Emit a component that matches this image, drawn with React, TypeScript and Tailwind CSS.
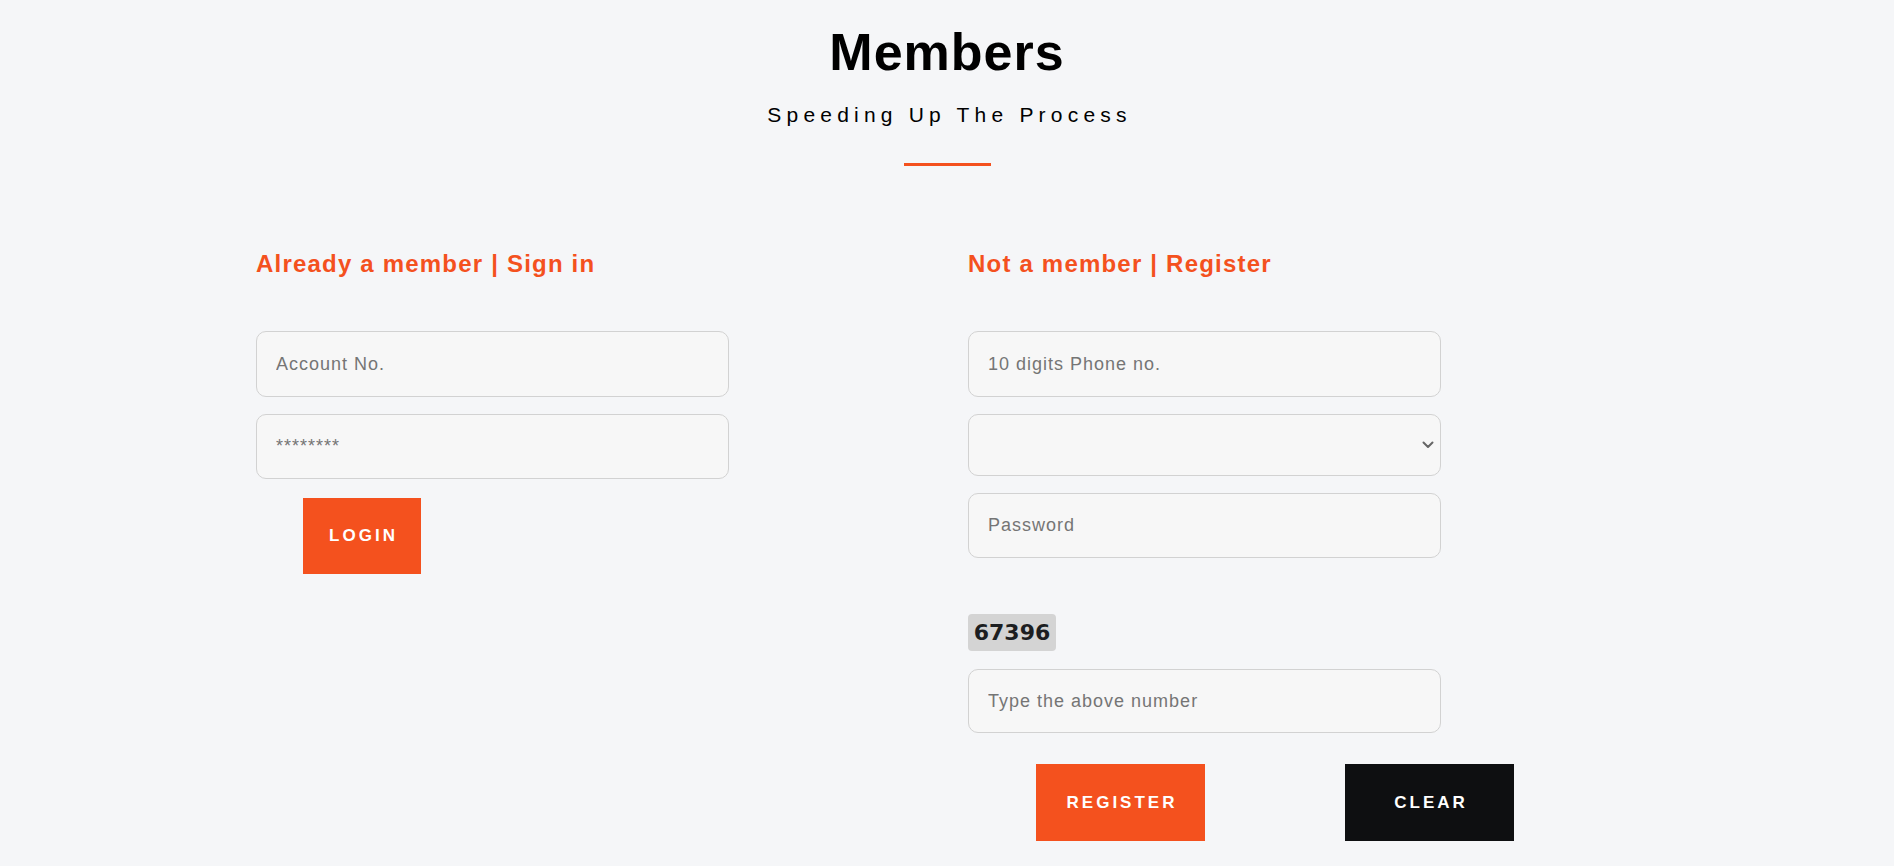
import { FunctionComponent, useState } from "react";

const inputClass =
  "block w-[473px] rounded-[10px] border border-[#d2d2d2] bg-[#f7f7f7] pl-[19px] pr-4 text-[18px] tracking-[1px] text-[#333] outline-none placeholder:text-[#757575]";

const ChevronDown = () => (
  <svg
    width="12"
    height="8"
    viewBox="0 0 12 8"
    fill="none"
    stroke="#666"
    strokeWidth={2}
    strokeLinecap="round"
    strokeLinejoin="round">
    <path d="M1.5 1.5 6 6l4.5-4.5" />
  </svg>
);

const App: FunctionComponent = () => {
  const [captcha] = useState("67396");

  return (
    <div className="min-h-screen bg-[#f5f6f8] font-['Liberation_Sans',Arial,sans-serif] text-black">
      {/* Page heading */}
      <div className="flex flex-col items-center pt-[26px]">
        <h1 className="text-[52px] leading-[52px] font-bold tracking-[1px]">
          Members
        </h1>
        <p className="mt-[26px] pl-[5px] text-[21px] leading-[21px] tracking-[5.2px]">
          Speeding Up The Process
        </p>
        <div className="mt-[38px] h-[3px] w-[87px] bg-[#f4511e]" />
      </div>

      <div className="flex pl-[256px] pt-[86px]">
        {/* Sign in */}
        <div className="w-[712px] shrink-0">
          <h2 className="text-[24px] leading-[24px] font-bold tracking-[1.2px] text-[#f4511e]">
            Already a member | Sign in
          </h2>
          <input
            type="text"
            placeholder="Account No."
            className={`${inputClass} mt-[55px] h-[66px]`}
          />
          <input
            type="password"
            placeholder="********"
            className={`${inputClass} mt-[17px] h-[65px]`}
          />
          <button className="mt-[19px] ml-[47px] flex h-[76px] w-[118px] items-center justify-center bg-[#f4511e] pl-[3px] text-[17px] font-bold tracking-[3px] text-white">
            LOGIN
          </button>
        </div>

        {/* Register */}
        <div className="w-[600px] shrink-0">
          <h2 className="text-[24px] leading-[24px] font-bold tracking-[1.2px] text-[#f4511e]">
            Not a member | Register
          </h2>
          <input
            type="text"
            placeholder="10 digits Phone no."
            className={`${inputClass} mt-[55px] h-[66px]`}
          />
          <div className="relative mt-[17px] w-[473px]">
            <select className="block h-[62px] w-[473px] appearance-none rounded-[10px] border border-[#d2d2d2] bg-[#f7f7f7] pl-[19px] text-[18px] outline-none">
              <option value=""></option>
            </select>
            <span className="pointer-events-none absolute top-[27px] right-[7px]">
              <ChevronDown />
            </span>
          </div>
          <input
            type="password"
            placeholder="Password"
            className={`${inputClass} mt-[17px] h-[65px]`}
          />
          <div className="mt-[56px] flex h-[37px] w-[88px] items-center justify-center rounded-[4px] bg-[#d4d4d4] font-['DejaVu_Sans',Verdana,sans-serif] text-[22px] font-bold text-[#1c1e21]">
            {captcha}
          </div>
          <input
            type="text"
            placeholder="Type the above number"
            className={`${inputClass} mt-[18px] h-[64px]`}
          />
          <div className="mt-[31px] flex">
            <button className="ml-[68px] flex h-[77px] w-[169px] shrink-0 items-center justify-center bg-[#f4511e] pl-[3px] text-[17px] font-bold tracking-[3px] text-white">
              REGISTER
            </button>
            <button className="ml-[140px] flex h-[77px] w-[169px] shrink-0 items-center justify-center bg-[#0e0f11] pl-[3px] text-[17px] font-bold tracking-[3px] text-white">
              CLEAR
            </button>
          </div>
        </div>
      </div>
    </div>
  );
};

export default App;
